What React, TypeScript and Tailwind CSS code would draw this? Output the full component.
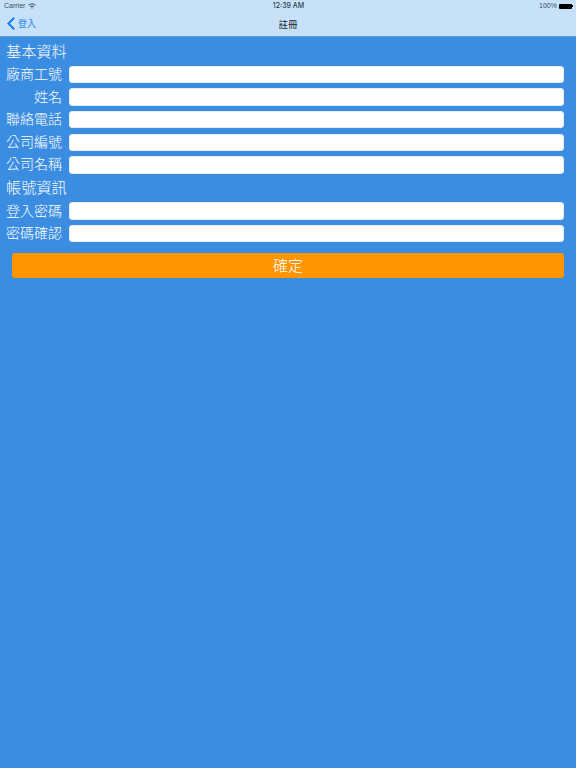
const cjk = { fontFamily: '"Noto Sans CJK TC", "Liberation Sans", sans-serif' };

const Row = ({ label }: { label: string }) => (
  <div className="flex items-center h-[17.6px]">
    <label className="w-[62px] pb-[2px] text-right text-[14px] leading-[17px] font-light text-white whitespace-nowrap shrink-0">
      {label}
    </label>
    <input
      type="text"
      className="ml-[7px] flex-1 min-w-0 h-[17.3px] bg-white rounded-[3px] outline-none border border-[#e4ecf5]"
    />
  </div>
);

const Heading = ({ text }: { text: string }) => (
  <h2 className="text-[15.2px] leading-[20px] text-white pl-[6px] font-light">{text}</h2>
);

const App = () => {
  return (
    <div className="w-[576px] h-[768px] flex flex-col bg-[#3b8de2] overflow-hidden" style={cjk}>
      {/* Nav bar */}
      <div className="h-[37px] shrink-0 bg-[#c7e2f8] border-b border-[#5b9fe0]">
        <div className="h-[12px] flex items-center justify-between pl-[4px] pr-[3px] text-[7px] text-[#3c4c5a] font-['Liberation_Sans']">
          <div className="flex items-center gap-[3px] w-[60px]">
            <span>Carrier</span>
            <svg width="8" height="6" viewBox="0 0 16 12" fill="none" stroke="#2c3a46" strokeWidth="1.8">
              <path d="M1 4.5 A10 10 0 0 1 15 4.5" />
              <path d="M4 7.5 A6 6 0 0 1 12 7.5" />
              <path d="M8 11.5 L6.2 9.6 A3 3 0 0 1 9.8 9.6 Z" fill="#2c3a46" stroke="none" />
            </svg>
          </div>
          <span className="font-['Inter'] font-medium text-[#2c3a46]">12:39 AM</span>
          <div className="flex items-center justify-end gap-[2px] w-[60px]">
            <span>100%</span>
            <div className="w-[13px] h-[5px] bg-black rounded-[1px]" />
            <div className="w-[1px] h-[2px] bg-black -ml-[2px]" />
          </div>
        </div>
        <div className="relative h-[24px] flex items-center justify-center">
          <div className="absolute left-[7px] top-[5px] flex items-center gap-[3px] text-[#1a7ef0] text-[9px]">
            <svg width="8" height="13" viewBox="0 0 8 13" fill="none" stroke="#0f7af0" strokeWidth="1.9">
              <path d="M7.2 0.8 L1.4 6.5 L7.2 12.2" />
            </svg>
            <span>登入</span>
          </div>
          <span className="text-[9.5px] text-[#1c2630]">註冊</span>
        </div>
      </div>

      {/* Form */}
      <form className="flex flex-col pr-[12px] pt-[2.5px]">
        <Heading text="基本資料" />
        <div className="mt-[6.2px] flex flex-col gap-[5px]">
          <Row label="廠商工號" />
          <Row label="姓名" />
          <Row label="聯絡電話" />
          <Row label="公司編號" />
          <Row label="公司名稱" />
        </div>
        <div className="mt-[2.3px]">
          <Heading text="帳號資訊" />
        </div>
        <div className="mt-[6.4px] flex flex-col gap-[5px]">
          <Row label="登入密碼" />
          <Row label="密碼確認" />
        </div>
        <button
          type="button"
          className="mt-[10.7px] ml-[12px] h-[25px] pb-[2px] bg-[#ff9500] rounded-[3px] text-white text-[15px] leading-[23px] font-light shadow-[0_0_1px_#7a7a6a]"
        >
          確定
        </button>
      </form>
    </div>
  );
};

export default App;
